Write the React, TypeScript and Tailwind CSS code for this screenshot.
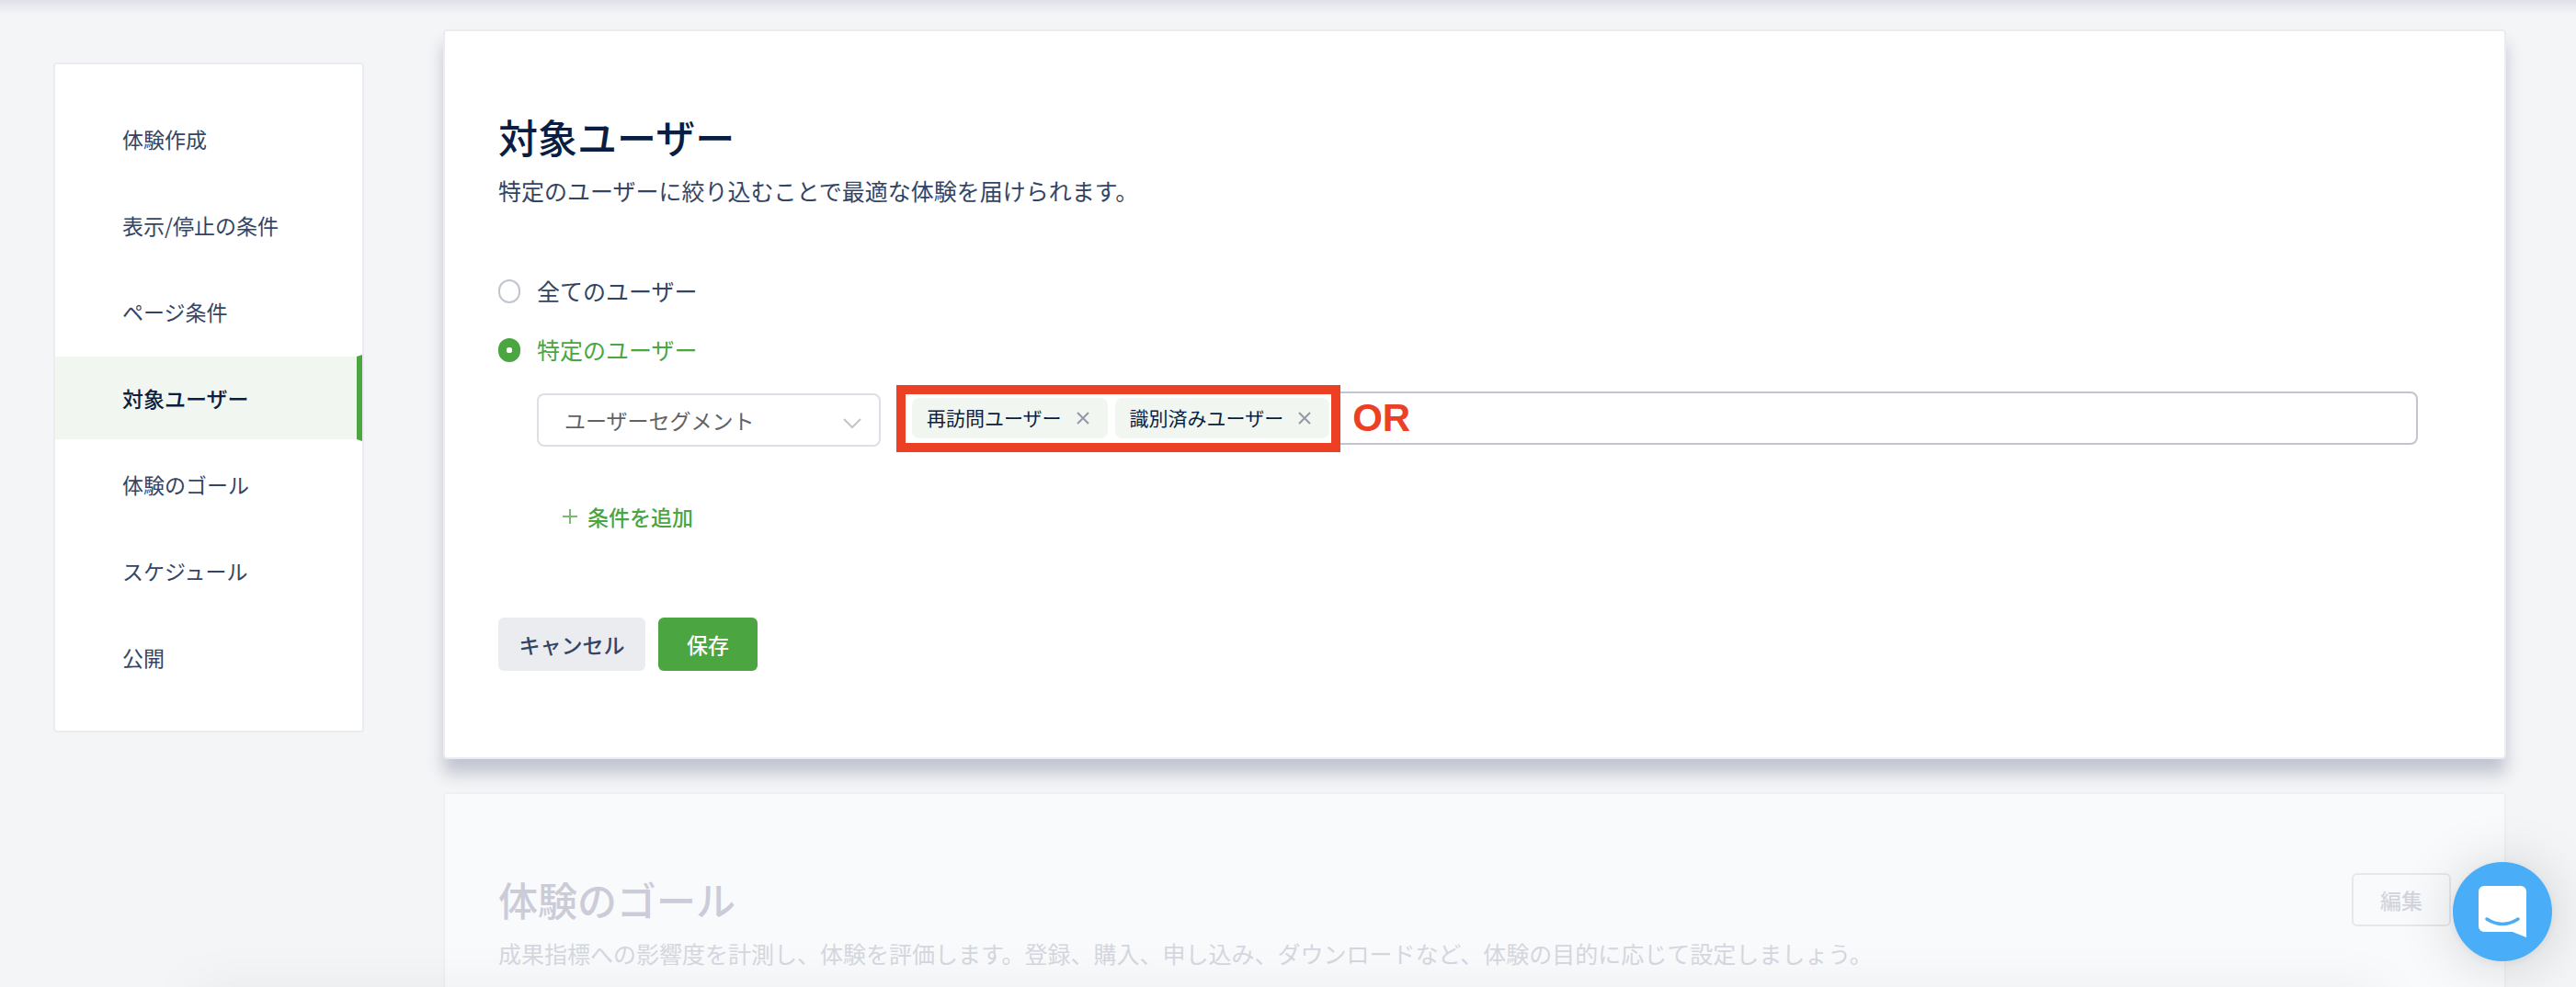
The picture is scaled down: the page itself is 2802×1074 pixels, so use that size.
import { useState } from 'react';

const steps = [
  '体験作成',
  '表示/停止の条件',
  'ページ条件',
  '対象ユーザー',
  '体験のゴール',
  'スケジュール',
  '公開',
];

const initialSegments = ['再訪問ユーザー', '識別済みユーザー'];

const audiences = [
  { value: 'all', label: '全てのユーザー' },
  { value: 'specific', label: '特定のユーザー' },
];

function Sidebar({ current }: { current: string }) {
  return (
    <nav className="mt-[68px] w-[338px] shrink-0 self-start rounded-sm border-2 border-[#ebecf0] bg-white pt-[34px] pb-[33px]">
      <ul>
        {steps.map((step) => (
          <li key={step}>
            <a
              href="#"
              aria-current={step === current ? 'step' : undefined}
              className={
                step === current
                  ? 'flex h-[94px] items-center border-y-2 border-r-[6px] border-y-white border-r-[#4ba541] bg-[#f1f6f0] pl-[73px] text-[23px] font-medium text-[#091e42]'
                  : 'flex h-[94px] items-center pl-[73px] text-[23px] text-[#344563]'
              }
            >
              {step}
            </a>
          </li>
        ))}
      </ul>
    </nav>
  );
}

function SegmentTag({ label, onRemove }: { label: string; onRemove: () => void }) {
  return (
    <li className="flex h-11 items-center gap-4 rounded-lg bg-[#f1f6f0] pr-5 pl-4 text-[21px] whitespace-nowrap text-[#091e42]">
      {label}
      <button type="button" aria-label={`${label}を削除`} onClick={onRemove} className="cursor-pointer">
        <svg width="14" height="14" viewBox="0 0 14 14" fill="none" stroke="#9499a8" strokeWidth="2">
          <path d="M1 1l12 12M13 1L1 13" />
        </svg>
      </button>
    </li>
  );
}

function SegmentInput() {
  const [segments, setSegments] = useState(initialSegments);

  return (
    <div className="flex h-[58px] flex-1 items-center rounded-lg border-2 border-[#c1c5d0] bg-white pl-[14px]">
      <div className="relative">
        <ul className="flex gap-2">
          {segments.map((segment) => (
            <SegmentTag
              key={segment}
              label={segment}
              onRemove={() => setSegments(segments.filter((s) => s !== segment))}
            />
          ))}
        </ul>
        {/* callout around the selected segments */}
        <div className="pointer-events-none absolute -top-[14px] -right-3 -bottom-[15px] -left-[17px] border-[10px] border-[#ec4024]" />
        <strong className="pointer-events-none absolute top-0 left-full ml-[25px] font-['Liberation_Sans',sans-serif] text-[42px] leading-[44px] font-bold text-[#ec4024]">
          OR
        </strong>
      </div>
      <input type="text" aria-label="ユーザーセグメント" className="ml-24 min-w-0 flex-1 text-[21px] outline-none" />
    </div>
  );
}

function AudienceCard() {
  const [audience, setAudience] = useState('specific');

  return (
    <section className="rounded-sm border-2 border-[#ebecf0] bg-white px-[58px] pt-[82px] pb-[94px] shadow-[0_16px_18px_#c1c5d0]">
      <h2 className="text-[43px] leading-[64px] font-medium text-[#091e42]">対象ユーザー</h2>
      <p className="mt-2 text-[25px] leading-[38px] text-[#344563]">
        特定のユーザーに絞り込むことで最適な体験を届けられます。
      </p>

      <form className="mt-[72px]">
        <div className="flex flex-col items-start gap-[26px]">
          {audiences.map(({ value, label }) => (
            <label
              key={value}
              className="flex h-[38px] items-center gap-[18px] text-[25px] text-[#344563] has-checked:text-[#4ba541]"
            >
              <input
                type="radio"
                name="audience"
                value={value}
                checked={audience === value}
                onChange={() => setAudience(value)}
                className="h-[26px] w-6 appearance-none rounded-full border-2 border-[#c1c5d0] bg-white checked:border-x-[9px] checked:border-y-[10px] checked:border-[#4ba541]"
              />
              {label}
            </label>
          ))}
        </div>

        <div className="mt-[26px] mr-9 ml-[42px] flex gap-[18px]">
          <div className="relative mt-0.5 w-[374px]">
            <select
              aria-label="条件の種類"
              className="h-[58px] w-full appearance-none rounded-lg border-2 border-[#dddfe6] bg-white pl-7 text-[23px] text-[#606266]"
            >
              <option>ユーザーセグメント</option>
            </select>
            <svg
              className="pointer-events-none absolute top-[26px] right-[21px]"
              width="20"
              height="13"
              viewBox="0 0 20 13"
              fill="none"
              stroke="#c0c4cc"
              strokeWidth="2"
            >
              <path d="M1 2l9 9 9-9" />
            </svg>
          </div>
          <SegmentInput />
        </div>

        <button
          type="button"
          className="mt-[58px] ml-[70px] flex h-9 cursor-pointer items-center gap-[11px] text-[23px] font-medium text-[#4ba541]"
        >
          <svg width="16" height="16" viewBox="0 0 16 16" fill="none" stroke="#78bc71" strokeWidth="2">
            <path d="M8 0v16M0 8h16" />
          </svg>
          条件を追加
        </button>

        <div className="mt-[92px] flex gap-[14px]">
          <button
            type="button"
            className="h-[58px] w-40 cursor-pointer rounded-md bg-[#ebecf0] text-[23px] font-medium text-[#344563]"
          >
            キャンセル
          </button>
          <button
            type="submit"
            className="h-[58px] w-[108px] cursor-pointer rounded-md bg-[#4ba541] text-[23px] font-medium text-white"
          >
            保存
          </button>
        </div>
      </form>
    </section>
  );
}

function GoalCard() {
  return (
    <section className="mt-9 flex items-start justify-between rounded-sm border-2 border-[#eff0f2] bg-[#f9fafc] px-[58px] pt-[82px] pb-[94px]">
      <div>
        <h2 className="text-[43px] leading-[64px] font-medium text-[#cbccd7]">体験のゴール</h2>
        <p className="mt-2 text-[25px] leading-[38px] text-[#d5d7df]">
          成果指標への影響度を計測し、体験を評価します。登録、購入、申し込み、ダウンロードなど、体験の目的に応じて設定しましょう。
        </p>
      </div>
      <button
        type="button"
        className="mt-1 h-[58px] w-[108px] cursor-pointer rounded-md border-2 border-[#e6e7ea] text-[23px] font-medium text-[#d3d5dd]"
      >
        編集
      </button>
    </section>
  );
}

function ChatLauncher() {
  return (
    <button
      type="button"
      aria-label="チャットを開く"
      className="fixed right-[26px] bottom-7 flex size-[108px] cursor-pointer items-center justify-center rounded-full bg-[#49adf7] shadow-[0_2px_12px_rgba(0,0,0,0.06),0_4px_64px_rgba(0,0,0,0.16)]"
    >
      <svg width="52" height="56" viewBox="0 0 52 56" fill="none">
        <path d="M6 0h40a6 6 0 0 1 6 6v50l-15-6H6a6 6 0 0 1-6-6V6a6 6 0 0 1 6-6z" fill="#fff" />
        <path d="M9 36q17 11 34 0" stroke="#49adf7" strokeWidth="3.5" strokeLinecap="round" />
      </svg>
    </button>
  );
}

export default function App() {
  return (
    <div className="relative h-screen overflow-hidden bg-[#f4f5f7] font-['Noto_Sans_CJK_JP',sans-serif]">
      <div className="pointer-events-none absolute inset-x-0 top-0 h-4 bg-linear-to-b from-[#e0e1e8] to-transparent" />
      <div className="flex gap-[86px] pr-[76px] pl-[58px]">
        <Sidebar current="対象ユーザー" />
        <main className="mt-8 min-w-0 flex-1">
          <AudienceCard />
          <GoalCard />
        </main>
      </div>
      {/* soft shade rising from the bottom edge */}
      <div className="pointer-events-none absolute inset-x-52 top-full h-20 shadow-[0_0_60px_rgba(0,0,0,0.05)]" />
      <ChatLauncher />
    </div>
  );
}
